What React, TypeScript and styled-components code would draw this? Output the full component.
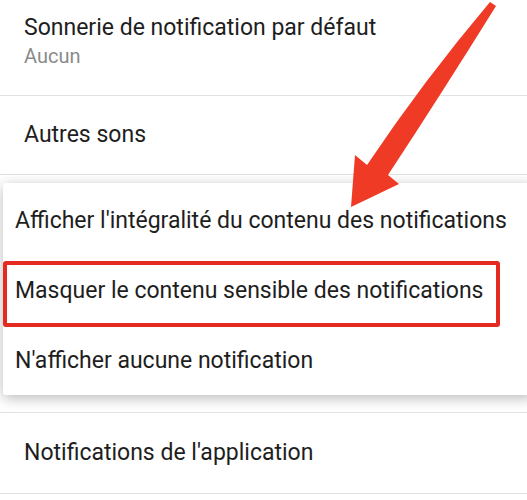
import React from "react";
import styled, { createGlobalStyle } from "styled-components";

const GlobalStyle = createGlobalStyle`
  body {
    margin: 0;
    background: #ffffff;
    font-family: Roboto, "Noto Sans", "Liberation Sans", sans-serif;
    overflow: hidden;
  }
`;

interface Setting {
  id: string;
  title?: string;
  summary?: string;
  height: number;
}

// the lock screen row sits under the open popup, so it is left empty
const settings: Setting[] = [
  { id: "ringtone", title: "Sonnerie de notification par défaut", summary: "Aucun", height: 96 },
  { id: "sounds", title: "Autres sons", height: 79 },
  { id: "lockscreen", height: 238 },
  { id: "apps", title: "Notifications de l'application", height: 81 },
];

const menuOptions = [
  { id: "all", label: "Afficher l'intégralité du contenu des notifications" },
  { id: "hide", label: "Masquer le contenu sensible des notifications" },
  { id: "none", label: "N'afficher aucune notification" },
];

export default function App() {
  return (
    <>
      <GlobalStyle />
      <Screen>
        <SettingsList>
          {settings.map((item) => (
            <SettingRow key={item.id} $height={item.height} $top={!!item.summary}>
              {item.title && <SettingTitle>{item.title}</SettingTitle>}
              {item.summary && <SettingSummary>{item.summary}</SettingSummary>}
            </SettingRow>
          ))}
        </SettingsList>

        <PopupMenu>
          {menuOptions.map((option) => (
            <MenuItem key={option.id}>{option.label}</MenuItem>
          ))}
        </PopupMenu>

        <Highlight />

        <Arrow viewBox="0 0 527 500" width={527} height={500}>
          <path
            d="M490 2 L496 6 Q440 96 388 175 L399 184 L351 207 L355 155 L367 165 Q424 80 490 2 Z"
            fill="#ef3a25"
          />
        </Arrow>
      </Screen>
    </>
  );
}

const Screen = styled.div`
  position: relative;
  width: 527px;
  height: 500px;
  overflow: hidden;
  background: #ffffff;
`;

const SettingsList = styled.div`
  display: flex;
  flex-direction: column;
`;

const SettingRow = styled.div<{ $height: number; $top: boolean }>`
  display: flex;
  flex-direction: column;
  justify-content: ${(p) => (p.$top ? "flex-start" : "center")};
  height: ${(p) => p.$height}px;
  padding: ${(p) => (p.$top ? "13px 24px 0" : "0 24px")};
  border-bottom: 1px solid #e2e2e2;
  box-sizing: border-box;
`;

const SettingTitle = styled.div`
  font-size: 23px;
  line-height: 30px;
  color: #1e1e1e;
`;

const SettingSummary = styled.div`
  margin-top: 1px;
  font-size: 20px;
  line-height: 24px;
  color: #8a8a8a;
`;

const PopupMenu = styled.div`
  position: absolute;
  top: 183px;
  left: 3px;
  right: -6px;
  display: flex;
  flex-direction: column;
  padding-top: 2px;
  background: #ffffff;
  border-radius: 3px;
  box-shadow: 0 3px 14px rgba(0, 0, 0, 0.28);
`;

const MenuItem = styled.div`
  height: 70px;
  display: flex;
  align-items: center;
  padding: 0 12px;
  font-size: 23px;
  color: #1e1e1e;
  white-space: nowrap;
`;

const Highlight = styled.div`
  position: absolute;
  top: 261px;
  left: 3px;
  width: 497px;
  height: 66px;
  box-sizing: border-box;
  border: 4px solid #e32b22;
  border-radius: 3px;
`;

const Arrow = styled.svg`
  position: absolute;
  top: 0;
  left: 0;
  pointer-events: none;
`;
